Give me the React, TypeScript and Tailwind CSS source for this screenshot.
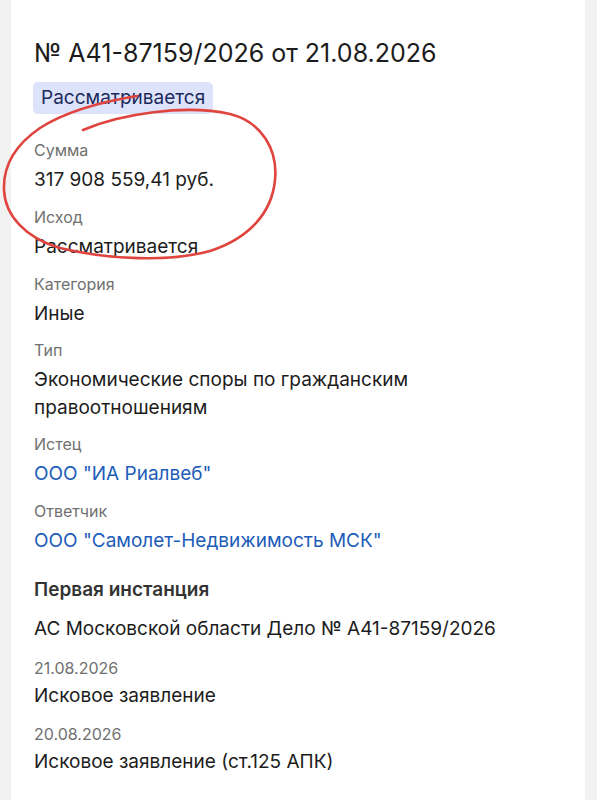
import React from 'react';

const font = { fontFamily: 'Inter, "Noto Sans", sans-serif' };

function Field({ label, value, link }: { label: string; value: string; link?: boolean }) {
  return (
    <div className="mt-[13px]">
      <div className="text-[16px] leading-[20px] text-[#707070]">{label}</div>
      <div
        className={
          'mt-[6px] text-[19px] leading-[28px] ' + (link ? 'text-[#1d5cb9]' : 'text-[#1c1c1c]')
        }
      >
        {value}
      </div>
    </div>
  );
}

export default function App() {
  return (
    <div className="relative min-h-screen bg-[#f2f2f2] pl-[11px] pr-[12px]" style={font}>
      <div className="min-h-[800px] bg-white pl-[23px] pr-[23px] pt-[37px] pb-[40px]">
        <h1 className="text-[25px] leading-[32px] text-[#1c1c1c]">№ А41-87159/2026 от 21.08.2026</h1>
        <div className="mt-[13px] mb-[13px] -ml-[1px] inline-flex h-[32px] items-center rounded-[5px] bg-[#dde3fa] px-[8px] text-[19px] text-[#1b2a5c]">
          Рассматривается
        </div>

        <Field label="Сумма" value="317 908 559,41 руб." />
        <Field label="Исход" value="Рассматривается" />
        <Field label="Категория" value="Иные" />
        <div className="-mt-[1px]">
          <Field label="Тип" value={'Экономические споры по гражданским правоотношениям'} />
        </div>
        <div className="-mt-[1px]">
          <Field label="Истец" value={'ООО "ИА Риалвеб"'} link />
        </div>
        <Field label="Ответчик" value={'ООО "Самолет-Недвижимость МСК"'} link />

        <h2 className="mt-[23px] text-[19px] leading-[24px] font-semibold text-[#333333]">Первая инстанция</h2>
        <div className="mt-[13px] text-[19px] leading-[28px] text-[#1c1c1c]">
          АС Московской области Дело № А41-87159/2026
        </div>
        <div className="mt-[15px] text-[16px] leading-[20px] text-[#707070]">21.08.2026</div>
        <div className="mt-[4px] text-[19px] leading-[28px] text-[#1c1c1c]">Исковое заявление</div>
        <div className="mt-[14px] text-[16px] leading-[20px] text-[#707070]">20.08.2026</div>
        <div className="mt-[4px] text-[19px] leading-[28px] text-[#1c1c1c]">Исковое заявление (ст.125 АПК)</div>
      </div>

      <svg
        className="pointer-events-none absolute left-0 top-0"
        width="597"
        height="800"
        viewBox="0 0 597 800"
        fill="none"
      >
        <path
          d="M83,130 C120,114 185,104 230,114 C262,122 278,150 275,180 C272,212 250,238 210,251 C170,262 110,260 60,248 C25,238 5,215 4,190 C3,165 15,145 40,128 C65,112 100,102 137,96"
          stroke="#e0443f"
          strokeWidth="2.6"
          strokeLinecap="round"
        />
      </svg>
    </div>
  );
}
